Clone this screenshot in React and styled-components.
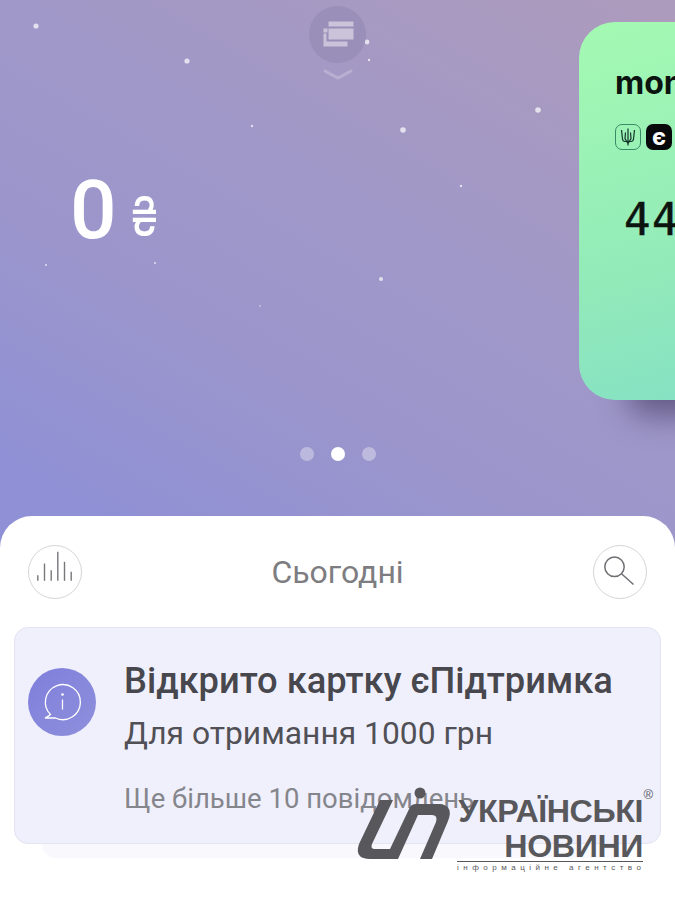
import React from 'react'
import styled, { createGlobalStyle } from 'styled-components'

const GlobalStyle = createGlobalStyle`
  html, body {
    margin: 0;
    padding: 0;
    background: #fff;
  }
  * {
    box-sizing: border-box;
  }
`

const Page = styled.div`
  position: relative;
  display: flex;
  flex-direction: column;
  width: 675px;
  height: 899px;
  overflow: hidden;
  font-family: Roboto, "Noto Sans", sans-serif;
  background: linear-gradient(210deg, #ad9bbc 0%, #a098c8 30%, #9a95cc 48%, #8f90d5 66%);
`

const Top = styled.div`
  position: relative;
  height: 516px;
  flex-shrink: 0;
`

const Stars = styled.svg`
  position: absolute;
  inset: 0;
`

const PullTab = styled.div`
  position: absolute;
  top: 6px;
  left: 309px;
  display: flex;
  flex-direction: column;
  align-items: center;
  gap: 6px;
  filter: blur(0.7px);
`

const PullCircle = styled.div`
  display: flex;
  align-items: center;
  justify-content: center;
  width: 57px;
  height: 57px;
  border-radius: 50%;
  background: #9a8fb8;
`

const Carousel = styled.div`
  position: relative;
  display: flex;
  padding-top: 22px;
  height: 400px;
`

const Balance = styled.div`
  display: flex;
  align-items: center;
  flex: 0 0 579px;
  padding: 0 0 2px 70px;
  color: #fff;
`

const Amount = styled.span`
  font-size: 82px;
  font-weight: 500;
  line-height: 1;
`

const Currency = styled.span`
  margin: 12px 0 0 10px;
  font-family: Inter, sans-serif;
  font-size: 55px;
  font-weight: 400;
  line-height: 1;
  transform: scaleX(0.8);
`

const BankCard = styled.div`
  flex: 0 0 420px;
  height: 378px;
  padding: 43px 36px;
  border-radius: 36px;
  background: linear-gradient(165deg, #a4fab2 0%, #92eab9 55%, #7edcc9 100%);
  box-shadow: 34px 30px 30px -14px rgba(60, 50, 90, 0.6);
`

const BankName = styled.div`
  font-family: Inter, Roboto, sans-serif;
  font-size: 32px;
  font-weight: 700;
  line-height: 36px;
  color: #0c1410;
`

const Badges = styled.div`
  display: flex;
  gap: 5px;
  margin-top: 23px;
`

const Badge = styled.div`
  display: flex;
  align-items: center;
  justify-content: center;
  width: 26px;
  height: 26px;
  border-radius: 7px;
  font-family: Inter, sans-serif;
  font-size: 24px;
  font-weight: 700;
  line-height: 1;
  color: #fff;
  background: ${props => (props.dark ? '#08090a' : 'transparent')};
  border: ${props => (props.dark ? 'none' : '1px solid #3a8a66')};
`

const CardNumber = styled.div`
  margin: 45px 0 0 9px;
  font-family: "DejaVu Sans Mono", monospace;
  font-size: 44px;
  letter-spacing: 1.5px;
  line-height: 50px;
  color: #0c1410;
  -webkit-text-stroke: 0.5px #0c1410;
`

const Dots = styled.div`
  display: flex;
  justify-content: center;
  gap: 17px;
  margin-top: 47px;
`

const Dot = styled.span`
  width: 14px;
  height: 14px;
  border-radius: 50%;
  background: ${props => (props.active ? '#fff' : 'rgba(255, 255, 255, 0.35)')};
`

const Sheet = styled.div`
  flex: 1;
  padding: 29px 14px 0;
  border-radius: 32px 32px 0 0;
  background: #fff;
`

const SheetHeader = styled.div`
  display: flex;
  align-items: center;
  justify-content: space-between;
  height: 54px;
  padding: 0 14px;
`

const RoundButton = styled.div`
  display: flex;
  width: 54px;
  height: 54px;
  border-radius: 50%;
  border: 1.5px solid #d6d6d7;
`

const SheetTitle = styled.div`
  font-size: 32px;
  line-height: 54px;
  color: #7d7d81;
`

const Notice = styled.div`
  display: flex;
  gap: 28px;
  height: 217px;
  margin-top: 28px;
  padding: 40px 13px 0;
  border: 1px solid #e3e3f1;
  border-radius: 14px;
  background: #f0f0fc;
`

const NoticeIcon = styled.div`
  flex: 0 0 68px;
  height: 68px;
  border-radius: 50%;
  background: linear-gradient(135deg, #7f7fdc, #8f8fdc);
`

const NoticeBody = styled.div`
  display: flex;
  flex-direction: column;
  margin-top: -7px;
`

const NoticeTitle = styled.div`
  font-size: 36.3px;
  font-weight: 500;
  line-height: 40px;
  white-space: nowrap;
  color: #47474d;
`

const NoticeText = styled.div`
  margin-top: 12px;
  font-size: 31.8px;
  line-height: 40px;
  white-space: nowrap;
  color: #505056;
`

const NoticeMore = styled.div`
  margin-top: 28px;
  font-size: 27.5px;
  line-height: 36px;
  white-space: nowrap;
  color: #85858c;
`

const NoticeBack = styled.div`
  height: 14px;
  margin: 0 28px;
  border-radius: 0 0 14px 14px;
  background: #f8f8fd;
`

const Watermark = styled.div`
  position: absolute;
  top: 780px;
  left: 350px;
  display: flex;
  color: #58585c;
`

const WatermarkText = styled.div`
  position: relative;
  width: 186px;
  margin: 14px 0 0 -3px;
  text-align: right;
  font-family: "Liberation Sans", Arial, sans-serif;
  font-weight: 700;
`

const WatermarkLine = styled.div`
  font-size: 32.2px;
  line-height: 35px;
  white-space: nowrap;
  letter-spacing: -0.4px;
`

const WatermarkNote = styled.div`
  margin-top: -3px;
  padding-top: 1px;
  border-top: 1.5px solid #58585c;
  font-size: 8px;
  font-weight: 400;
  line-height: 9px;
  letter-spacing: 4.5px;
  white-space: nowrap;
  text-align: left;
`

const Registered = styled.span`
  position: absolute;
  top: -7px;
  right: -10px;
  font-size: 13px;
  font-weight: 400;
  line-height: 15px;
`

const stars = [
  [36, 26, 2.6], [187, 61, 2.6], [367, 42, 2.4], [369, 60, 1.2], [538, 110, 2.8], [403, 130, 2.8],
  [252, 126, 1.2], [461, 186, 1.2], [46, 265, 1], [155, 263, 1], [381, 279, 2], [260, 306, 0.8],
]

const bars = [[10.3, 30.7], [17, 19], [23.7, 25.7], [30.3, 7.3], [37, 17.3], [43.7, 27.3]]

const Trident = () => (
  <svg width="16" height="20" viewBox="0 0 16 20" fill="none" stroke="#14352a" strokeWidth="1.2">
    <path d="M8 1.5v17M1.5 3l1 9q.3 2.5 2.5 2.5h6q2.2 0 2.5-2.5l1-9M5.5 5.5l-.5 6 3 5 3-5-.5-6" />
  </svg>
)

const App = () => (
  <Page>
    <GlobalStyle />
    <Top>
      <Stars width="675" height="516">
        {stars.map(([x, y, r]) => <circle key={x} cx={x} cy={y} r={r} fill="#fff" opacity="0.7" />)}
      </Stars>
      <Carousel>
        <Balance>
          <Amount>0</Amount>
          <Currency>₴</Currency>
        </Balance>
        <BankCard>
          <BankName>monobank</BankName>
          <Badges>
            <Badge><Trident /></Badge>
            <Badge dark>є</Badge>
          </Badges>
          <CardNumber>4441 1144</CardNumber>
        </BankCard>
      </Carousel>
      <PullTab>
        <PullCircle>
          <svg width="34" height="28" viewBox="0 0 34 28" fill="#c9c4da">
            <path d="M7.5.5h25v5h-25zM7.5 7.5h25v11h-25zM2.5 20.5h24v5h-24zM2.5 7.5h4v4h-4zM2.5 12.5h3v8h-3z" />
          </svg>
        </PullCircle>
        <svg width="30" height="11" viewBox="0 0 30 11" fill="none" stroke="#b7b0d2" strokeWidth="3">
          <path d="M1 1.5l14 7.5 14-7.5" />
        </svg>
      </PullTab>
      <Dots>
        <Dot />
        <Dot active />
        <Dot />
      </Dots>
    </Top>
    <Sheet>
      <SheetHeader>
        <RoundButton>
          <svg width="51" height="51" viewBox="1.5 1.5 51 51" stroke="#77777c" strokeWidth="1.4">
            {bars.map(([x, y]) => <line key={x} x1={x} x2={x} y1={y} y2="36.3" />)}
          </svg>
        </RoundButton>
        <SheetTitle>Сьогодні</SheetTitle>
        <RoundButton>
          <svg width="51" height="51" viewBox="1.5 1.5 51 51" fill="none" stroke="#6f6f74" strokeWidth="1.5">
            <circle cx="22" cy="22.3" r="9.7" />
            <path d="M29 29.3L41 40" />
          </svg>
        </RoundButton>
      </SheetHeader>
      <Notice>
        <NoticeIcon>
          <svg width="68" height="68" viewBox="0 0 68 68" fill="none" stroke="#fff" strokeWidth="1.3">
            <path d="M22.5 46.5A17.5 17.5 0 1 1 27.5 50L17 50Q21 48 22.5 46.5Z" />
            <path d="M34.5 31.5v10" />
            <circle cx="34.5" cy="26.5" r="0.7" fill="#fff" />
          </svg>
        </NoticeIcon>
        <NoticeBody>
          <NoticeTitle>Відкрито картку єПідтримка</NoticeTitle>
          <NoticeText>Для отримання 1000 грн</NoticeText>
          <NoticeMore>Ще більше 10 повідомлень</NoticeMore>
        </NoticeBody>
      </Notice>
      <NoticeBack />
    </Sheet>
    <Watermark>
      <svg width="110" height="85" viewBox="0 0 110 85" fill="#58585c">
        <path d="M30 20L43 20L22 64Q20 69 25 69L40 69L60 27Q62 24 66 24L88 24C100 24 102 32 98 41L82 79L70 79L86 42Q88 35 82 35L68 35L48 79L20 79Q4 79 9 64Z" />
        <circle cx="70" cy="13" r="5.5" />
      </svg>
      <WatermarkText>
        <Registered>®</Registered>
        <WatermarkLine>УКРАЇНСЬКІ</WatermarkLine>
        <WatermarkLine>НОВИНИ</WatermarkLine>
        <WatermarkNote>інформаційне агентство</WatermarkNote>
      </WatermarkText>
    </Watermark>
  </Page>
)

export default App
